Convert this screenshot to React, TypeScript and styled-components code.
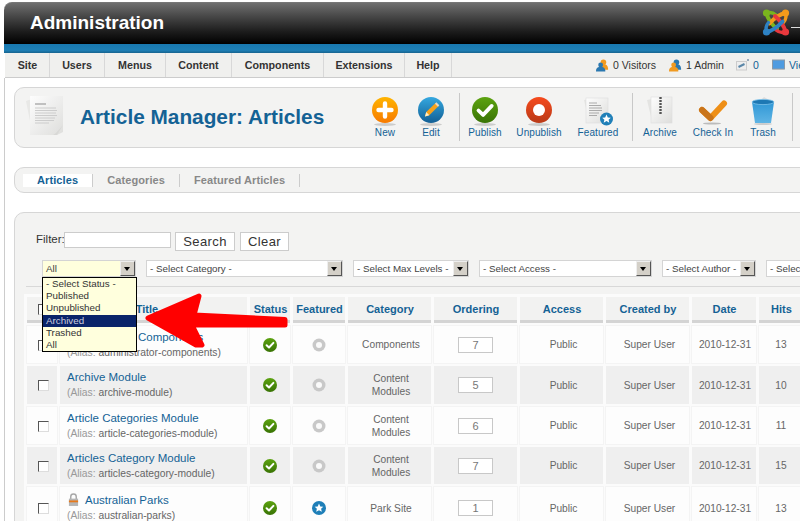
import React from "react";
import styled, { createGlobalStyle } from "styled-components";

const Global = createGlobalStyle`
  html, body { margin: 0; padding: 0; background: #fff; overflow: hidden; }
  body { font-family: "Liberation Sans", Arial, sans-serif; }
  * { box-sizing: border-box; }
`;

const BLUE = "#146295";

const Page = styled.div`
  position: relative;
  width: 800px;
  height: 521px;
  overflow: hidden;
  padding: 2px 0 0 4px;
`;
const Wide = styled.div`
  width: 1000px;
`;
const Header = styled.header`
  height: 42px;
  border-top-left-radius: 8px;
  background: linear-gradient(#6f6f6f 0%, #4a4a4a 30%, #1c1c1c 70%, #000 100%);
  border-top: 1px solid #777;
  display: flex;
  align-items: flex-start;
  padding-left: 26px;
`;
const Brand = styled.h1`
  margin: 8px 0 0;
  color: #fff;
  font-size: 19px;
  line-height: 24px;
  font-weight: bold;
`;
const LogoSlot = styled.div`
  margin: 5px 0 0 598px;
  display: flex;
  align-items: center;
`;
const LogoDash = styled.span`
  display: block;
  width: 10px;
  height: 1px;
  margin: 9px 0 0 1px;
  background: #ddd;
`;
const BlueBar = styled.div`
  height: 9px;
  background: linear-gradient(#1878b0, #1e7fb5 70%, #17648f);
`;
const Menu = styled.nav`
  height: 25px;
  margin-left: 1px;
  padding-left: 1px;
  background: #f0f0ee;
  border-bottom: 1px solid #ccc;
  display: flex;
  align-items: stretch;
`;
const MenuItem = styled.div<{ $w: number }>`
  width: ${(p) => p.$w}px;
  border-right: 1px solid #d8d8d8;
  font-size: 10.7px;
  font-weight: bold;
  color: #333;
  line-height: 24px;
  text-align: center;
`;
const Status = styled.div`
  margin-left: 144px;
  display: flex;
  align-items: center;
  height: 24px;
`;
const StatusEntry = styled.div<{ $w: number }>`
  width: ${(p) => p.$w}px;
  display: flex;
  align-items: center;
  gap: 4px;
  font-size: 10.5px;
  color: #333;
`;
const Count = styled.span`
  color: ${BLUE};
`;
const Body = styled.main`
  border-left: 1px solid #ccc;
  padding: 9px 0 0 9px;
`;
const Panel = styled.section`
  background: #f3f3f2;
  border: 1px solid #d6d6d6;
  border-radius: 10px 0 0 10px;
`;
const ToolPanel = styled(Panel)`
  height: 61px;
  display: flex;
  align-items: flex-start;
`;
const PageHead = styled.div`
  width: 347px;
  height: 59px;
  padding: 7px 0 0 10px;
  display: flex;
  align-items: flex-start;
`;
const Title = styled.h2`
  margin: 9px 0 0 15px;
  font-size: 20.8px;
  line-height: 25px;
  font-weight: bold;
  color: ${BLUE};
  white-space: nowrap;
`;
const ToolButton = styled.div<{ $w: number }>`
  width: ${(p) => p.$w}px;
  height: 59px;
  padding-top: 8px;
  display: flex;
  flex-direction: column;
  align-items: center;
  font-size: 10px;
  letter-spacing: 0.1px;
  color: ${BLUE};
`;
const ToolIcon = styled.div`
  height: 30px;
`;
const ToolLabel = styled.span`
  line-height: 13px;
  white-space: nowrap;
`;
const ToolSep = styled.div<{ $ml: number }>`
  width: 1px;
  height: 48px;
  margin: 5px -1px 0 ${(p) => p.$ml}px;
  background: #c8c8c8;
  flex: none;
`;
const TabPanel = styled(Panel)`
  height: 26px;
  margin-top: 19px;
  padding: 6px 0 0 8px;
  display: flex;
  align-items: flex-start;
`;
const Tab = styled.div<{ $active?: boolean }>`
  height: 13px;
  padding: 0 14px;
  border-right: 1px solid #ccc;
  background: ${(p) => (p.$active ? "#fff" : "transparent")};
  color: ${(p) => (p.$active ? BLUE : "#888")};
  font-size: 11px;
  font-weight: bold;
  line-height: 13px;
  letter-spacing: 0.1px;
`;
const MainPanel = styled(Panel)`
  margin-top: 19px;
  height: 400px;
  padding-top: 19px;
`;
const FilterRow = styled.div`
  height: 20px;
  padding-left: 21px;
  display: flex;
  align-items: flex-start;
  font-size: 11.5px;
  color: #333;
`;
const FilterLabel = styled.label`
  line-height: 14px;
  width: 28px;
`;
const FilterInput = styled.div`
  width: 107px;
  height: 16px;
  background: #fff;
  border: 1px solid #ccc;
`;
const FilterButton = styled.div<{ $w: number; $ml: number }>`
  width: ${(p) => p.$w}px;
  margin-left: ${(p) => p.$ml}px;
  height: 19px;
  background: #fff;
  border: 1px solid #ccc;
  font-size: 13px;
  letter-spacing: 0.4px;
  line-height: 18px;
  text-align: center;
  color: #333;
`;
const SelectRow = styled.div`
  margin-top: 8px;
  height: 17px;
  padding-left: 27px;
  display: flex;
  gap: 10px;
`;
const SelectBox = styled.div<{ $w: number; $open?: boolean }>`
  position: relative;
  flex: none;
  width: ${(p) => p.$w}px;
  height: 17px;
  padding: 0 0 0 3px;
  background: ${(p) => (p.$open ? "#ffffdd" : "#fff")};
  border: 1px solid #d4d4d4;
  font-size: 9.8px;
  line-height: 15px;
  color: #444;
  white-space: nowrap;
  overflow: visible;
`;
const SelectArrow = styled.span`
  position: absolute;
  right: 0;
  top: 0;
  width: 15px;
  height: 15px;
  background: #d4d0c8;
  border: 1px solid;
  border-color: #eee #555 #555 #eee;
  &::after {
    content: "";
    position: absolute;
    left: 3px;
    top: 5px;
    border: 3px solid transparent;
    border-top: 4px solid #000;
    border-bottom: 0;
  }
`;
const Dropdown = styled.ul`
  position: absolute;
  z-index: 3;
  left: -1px;
  top: 16px;
  width: 95px;
  height: 75px;
  margin: 0;
  padding: 0;
  list-style: none;
  background: #ffffdd;
  border: 1px solid #000;
`;
const Option = styled.li<{ $selected?: boolean }>`
  height: 12.2px;
  padding-left: 3px;
  font-size: 9.8px;
  line-height: 11px;
  background: ${(p) => (p.$selected ? "#0a246a" : "transparent")};
  color: ${(p) => (p.$selected ? "#ccd" : "#333")};
`;
const Rule = styled.hr`
  margin: 9px 0 0 11px;
  height: 1px;
  border: 0;
  background: #d8d8d8;
`;
const Table = styled.table`
  margin: 7px 0 0 9px;
  table-layout: fixed;
  width: 782px;
  border-collapse: separate;
  border-spacing: 3px;
  background: #fbfbfb;
`;
const HeadCell = styled.th`
  height: 26px;
  padding: 0 0 0 1px;
  background: #f2f2f1;
  border-bottom: 3px solid #d4d4d4;
  font-size: 11px;
  font-weight: bold;
  color: ${BLUE};
  text-align: center;
`;
const SortMark = styled.span`
  display: inline-block;
  margin-left: 8px;
  vertical-align: middle;
  border: 3px solid transparent;
  border-bottom: 4px solid ${BLUE};
  border-top: 0;
`;
const Cell = styled.td<{ $even: boolean; $pad?: number }>`
  padding: 0 0 0 ${(p) => p.$pad ?? 0}px;
  background: ${(p) => (p.$even ? "#efefef" : "#fdfdfd")};
  outline: 1px solid ${(p) => (p.$even ? "transparent" : "#f4f4f4")};
  font-size: 10.2px;
  line-height: 13px;
  color: #666;
  text-align: center;
`;
const TitleCell = styled(Cell)`
  padding-left: 7px;
  text-align: left;
`;
const ArticleLink = styled.div`
  font-size: 11.5px;
  line-height: 16px;
  color: ${BLUE};
  white-space: nowrap;
  display: flex;
  align-items: center;
  gap: 6px;
`;
const Alias = styled.div`
  font-size: 10.3px;
  line-height: 16px;
  color: #666;
  white-space: nowrap;
`;
const AliasKey = styled.span`
  color: #999;
`;
const Check = styled.span`
  display: inline-block;
  vertical-align: middle;
  width: 11px;
  height: 11px;
  margin-left: 2px;
  background: #fff;
  border: 1px solid;
  border-color: #555 #ddd #ddd #555;
`;
const OrderBox = styled.div`
  width: 35px;
  height: 16px;
  margin: 0 auto;
  background: #fff;
  border: 1px solid #c8c8c8;
  font-size: 11px;
  line-height: 14px;
  color: #777;
`;
const Arrow = styled.svg`
  position: absolute;
  z-index: 4;
  left: 0;
  top: 0;
  pointer-events: none;
`;

const Defs = () => (
  <svg width="0" height="0" style={{ position: "absolute" }}>
    <defs>
      <linearGradient id="gOrange" x1="0" y1="0" x2="0" y2="1"><stop offset="0" stopColor="#ffb400" /><stop offset="1" stopColor="#f77a00" /></linearGradient>
      <linearGradient id="gBlue" x1="0" y1="0" x2="0" y2="1"><stop offset="0" stopColor="#35a8e0" /><stop offset="1" stopColor="#125f95" /></linearGradient>
      <linearGradient id="gGreen" x1="0" y1="0" x2="0" y2="1"><stop offset="0" stopColor="#5ca310" /><stop offset="1" stopColor="#397305" /></linearGradient>
      <linearGradient id="gRed" x1="0" y1="0" x2="0" y2="1"><stop offset="0" stopColor="#f64a1d" /><stop offset="1" stopColor="#b93a18" /></linearGradient>
      <linearGradient id="gBin" x1="0" y1="0" x2="0" y2="1"><stop offset="0" stopColor="#2f97d6" /><stop offset="1" stopColor="#5fb4e4" /></linearGradient>
      <linearGradient id="gPaper" x1="0" y1="0" x2="1" y2="1"><stop offset="0" stopColor="#fdfdfd" /><stop offset="1" stopColor="#dededc" /></linearGradient>
    </defs>
  </svg>
);

const Shadow = () => <ellipse cx="14" cy="28.5" rx="11" ry="1.4" fill="#bbb" opacity=".7" />;

const NewIcon = () => (
  <svg width="28" height="30" viewBox="0 0 28 30">
    <Shadow />
    <circle cx="14" cy="14" r="13" fill="url(#gOrange)" />
    <path d="M14 7.5v13M7.5 14h13" stroke="#fff" strokeWidth="4.4" strokeLinecap="round" />
  </svg>
);
const EditIcon = () => (
  <svg width="28" height="30" viewBox="0 0 28 30">
    <Shadow />
    <circle cx="14" cy="14" r="13" fill="url(#gBlue)" />
    <path d="M8 20.5l1.2-4.4L18.6 7l3 3-9.3 9.2z" fill="#f6a21c" />
    <path d="M18.6 7l3 3" stroke="#e9d8c0" strokeWidth="2" />
    <path d="M8 20.5l1.2-4.4 3.1 3.1z" fill="#fff0c8" />
  </svg>
);
const PublishIcon = () => (
  <svg width="28" height="30" viewBox="0 0 28 30">
    <Shadow />
    <circle cx="14" cy="14" r="13" fill="url(#gGreen)" />
    <path d="M7.5 14.5l4.6 4.4 8.6-9" fill="none" stroke="#fff" strokeWidth="3.8" strokeLinecap="round" strokeLinejoin="round" />
  </svg>
);
const UnpublishIcon = () => (
  <svg width="28" height="30" viewBox="0 0 28 30">
    <Shadow />
    <circle cx="14" cy="14" r="13" fill="url(#gRed)" />
    <circle cx="14" cy="14" r="6" fill="#fff" />
  </svg>
);
const FeaturedIcon = () => (
  <svg width="32" height="30" viewBox="0 0 32 30">
    <path d="M2 4l5-1v22z" fill="#e4e4e2" />
    <rect x="4" y="2" width="22" height="25" fill="url(#gPaper)" stroke="#ddd" strokeWidth=".6" />
    <path d="M7 7h8M7 9.5h12M7 12h13M7 14.5h13M7 17h10M7 19.5h8" stroke="#aaa" strokeWidth="1" />
    <circle cx="24.5" cy="23" r="6.5" fill="#1f7fb8" />
    <path d="M24.5 18.6l1.3 2.8 3 .3-2.2 2 .7 3-2.8-1.6-2.8 1.6.7-3-2.2-2 3-.3z" fill="#fff" />
  </svg>
);
const ArchiveIcon = () => (
  <svg width="30" height="30" viewBox="0 0 30 30">
    <path d="M2 4l5-1v22z" fill="#e4e4e2" />
    <rect x="6" y="1" width="21" height="26" fill="url(#gPaper)" stroke="#ddd" strokeWidth=".6" />
    <path d="M15.5 1v18" stroke="#555" strokeWidth="2.4" strokeDasharray="2 1" />
  </svg>
);
const CheckInIcon = () => (
  <svg width="30" height="30" viewBox="0 0 30 30">
    <ellipse cx="14" cy="27.5" rx="9" ry="1" fill="#bbb" />
    <path d="M4 14l8.5 8L26 7.5" fill="none" stroke="#ee8f17" strokeWidth="6" strokeLinecap="round" strokeLinejoin="round" />
    <path d="M4 14l8.5 8" fill="none" stroke="#c9741a" strokeWidth="6" strokeLinecap="round" />
  </svg>
);
const TrashIcon = () => (
  <svg width="30" height="30" viewBox="0 0 30 30">
    <ellipse cx="15" cy="28" rx="9" ry="1" fill="#ccc" />
    <path d="M12 5l4-4 5 3z" fill="#ddd" />
    <path d="M4 6h22l-3 21H7z" fill="url(#gBin)" />
    <ellipse cx="15" cy="6" rx="11" ry="2.6" fill="#1d78b4" stroke="#7cc2ea" strokeWidth=".8" />
  </svg>
);
const ArticlesDoc = () => (
  <svg width="40" height="42" viewBox="0 0 40 42" style={{ flex: "none" }}>
    <path d="M1 6l6-2v32z" fill="#e8e8e6" />
    <path d="M5 1h33v36l-6 3H5z" fill="url(#gPaper)" />
    <path d="M38 30l-6 10h-4c4-2 6-6 10-10z" fill="#d8d8d6" />
    <path d="M10 9h11" stroke="#aaa" strokeWidth="1.4" />
    <path d="M10 13h21M10 15.5h22M10 18h21M10 20.5h22M10 23h20M10 25.5h19M10 28h14" stroke="#ccc" strokeWidth="1" />
  </svg>
);
const Hook = ({ color, angle }: { color: string; angle: number }) => (
  <g transform={`rotate(${angle} 14 14.5)`}>
    <path d="M4.5 5 Q6 13 15 21" fill="none" stroke={color} strokeWidth="4" strokeLinecap="round" />
    <path d="M4.5 5 Q10 3.5 14 7" fill="none" stroke={color} strokeWidth="3.4" strokeLinecap="round" />
    <circle cx="4.5" cy="5" r="3.6" fill={color} />
  </g>
);
const JoomlaLogo = () => (
  <svg width="28" height="29" viewBox="0 0 28 29">
    <Hook color="#7ab51d" angle={0} />
    <Hook color="#f49a1a" angle={90} />
    <Hook color="#e8383d" angle={180} />
    <Hook color="#2e82c4" angle={270} />
  </svg>
);
const PeopleIcon = ({ flip }: { flip?: boolean }) => {
  const back = flip ? "#f09a20" : "#2b78b0";
  const front = flip ? "#2b78b0" : "#f09a20";
  return (
    <svg width="13" height="14" viewBox="0 0 14 14" style={{ flex: "none" }}>
      <circle cx="8" cy="4" r="3" fill={front} />
      <path d="M3 11c0-3 2-5 5-5s5 2 5 5v1H3z" fill={front} />
      <circle cx="5" cy="7" r="2.6" fill={back} />
      <path d="M0 13c0-2.4 2-4 5-4s5 1.6 5 4v1H0z" fill={back} />
    </svg>
  );
};
const MailIcon = () => (
  <svg width="13" height="12" viewBox="0 0 13 12" style={{ flex: "none" }}>
    <rect x="0.5" y="2.5" width="10" height="8.5" fill="#eee" stroke="#ccc" />
    <path d="M2.5 8l6-3" stroke="#5b87a8" strokeWidth="2" />
    <path d="M11 0h2v2h-2z" fill="#9ab" />
  </svg>
);
const ScreenIcon = () => (
  <svg width="13" height="12" viewBox="0 0 13 12" style={{ flex: "none" }}>
    <rect x=".5" y="1" width="12" height="9" fill="#4f9be0" stroke="#8a99a8" />
    <rect x="1" y="10" width="11" height="1" fill="#bbb" />
  </svg>
);
const StatusOk = () => (
  <svg width="14" height="14" viewBox="0 0 14 14" style={{ verticalAlign: "middle" }}>
    <circle cx="7" cy="7" r="7" fill="url(#gGreen)" />
    <path d="M3.6 7.2l2.4 2.3 4.4-4.6" fill="none" stroke="#fff" strokeWidth="2" strokeLinecap="round" strokeLinejoin="round" />
  </svg>
);
const FeatOff = () => (
  <svg width="14" height="14" viewBox="0 0 14 14" style={{ verticalAlign: "middle" }}>
    <circle cx="7" cy="7" r="6.5" fill="#c8c8c8" />
    <circle cx="7" cy="7" r="3" fill="#fafafa" />
  </svg>
);
const FeatOn = () => (
  <svg width="14" height="14" viewBox="0 0 14 14" style={{ verticalAlign: "middle" }}>
    <circle cx="7" cy="7" r="7" fill="#1f7fb8" />
    <path d="M7 2.6l1.3 2.8 3 .3-2.2 2 .7 3L7 9.2l-2.8 1.5.7-3-2.2-2 3-.3z" fill="#fff" />
  </svg>
);
const LockIcon = () => (
  <svg width="11" height="14" viewBox="0 0 12 15" style={{ flex: "none", marginLeft: 1 }}>
    <path d="M3 7V4a3 3 0 0 1 6 0v3" fill="none" stroke="#a8a8a8" strokeWidth="1.6" />
    <rect x="1" y="6" width="10" height="8" fill="#b5b5b5" />
    <rect x="1" y="8" width="10" height="2" fill="#e8791a" />
  </svg>
);

const menuItems = [
  { label: "Site", w: 44 },
  { label: "Users", w: 55 },
  { label: "Menus", w: 61 },
  { label: "Content", w: 66 },
  { label: "Components", w: 92 },
  { label: "Extensions", w: 81 },
  { label: "Help", w: 47 },
];

type Tool = { label?: string; w?: number; icon?: React.ReactNode; sepMl?: number };
const tools: Tool[] = [
  { label: "New", w: 46, icon: <NewIcon /> },
  { label: "Edit", w: 46, icon: <EditIcon /> },
  { sepMl: 5 },
  { label: "Publish", w: 52, icon: <PublishIcon /> },
  { label: "Unpublish", w: 56, icon: <UnpublishIcon /> },
  { label: "Featured", w: 62, icon: <FeaturedIcon /> },
  { sepMl: 3 },
  { label: "Archive", w: 56, icon: <ArchiveIcon /> },
  { label: "Check In", w: 50, icon: <CheckInIcon /> },
  { label: "Trash", w: 50, icon: <TrashIcon /> },
  { sepMl: 4 },
];

const selects = [
  { w: 94, text: "All", open: true },
  { w: 197, text: "- Select Category -" },
  { w: 116, text: "- Select Max Levels -" },
  { w: 173, text: "- Select Access -" },
  { w: 94, text: "- Select Author -" },
  { w: 120, text: "- Select Language -" },
];

const options = ["- Select Status -", "Published", "Unpublished", "Archived", "Trashed", "All"];

const columns = [
  { label: "", w: 30 },
  { label: "Title", w: 187 },
  { label: "Status", w: 40 },
  { label: "Featured", w: 52 },
  { label: "Category", w: 83 },
  { label: "Ordering", w: 83 },
  { label: "Access", w: 83 },
  { label: "Created by", w: 83 },
  { label: "Date", w: 64 },
  { label: "Hits", w: 44 },
];

const rows = [
  { title: "Administrator Components", alias: "administrator-components", cat: ["Components"], order: 7, hits: 13, h: 37 },
  { title: "Archive Module", alias: "archive-module", cat: ["Content", "Modules"], order: 5, hits: 10, h: 38 },
  { title: "Article Categories Module", alias: "article-categories-module", cat: ["Content", "Modules"], order: 6, hits: 11, h: 37 },
  { title: "Articles Category Module", alias: "articles-category-module", cat: ["Content", "Modules"], order: 7, hits: 15, h: 37 },
  { title: "Australian Parks", alias: "australian-parks", cat: ["Park Site"], order: 1, hits: 13, h: 42, locked: true, featured: true },
];

export default function App() {
  return (
    <Page>
      <Global />
      <Defs />
      <Wide>
        <Header>
          <Brand>Administration</Brand>
          <LogoSlot>
            <JoomlaLogo />
            <LogoDash />
          </LogoSlot>
        </Header>
        <BlueBar />
        <Menu>
          {menuItems.map((m) => (
            <MenuItem key={m.label} $w={m.w}>{m.label}</MenuItem>
          ))}
          <Status>
            <StatusEntry $w={73}><PeopleIcon /><span>0 Visitors</span></StatusEntry>
            <StatusEntry $w={67}><PeopleIcon flip /><span>1 Admin</span></StatusEntry>
            <StatusEntry $w={36}><MailIcon /><Count>0</Count></StatusEntry>
            <StatusEntry $w={90}><ScreenIcon /><Count>View site</Count></StatusEntry>
          </Status>
        </Menu>
        <Body>
          <ToolPanel>
            <PageHead>
              <ArticlesDoc />
              <Title>Article Manager: Articles</Title>
            </PageHead>
            {tools.map((t, i) =>
              t.sepMl !== undefined ? (
                <ToolSep key={i} $ml={t.sepMl} />
              ) : (
                <ToolButton key={i} $w={t.w as number}>
                  <ToolIcon>{t.icon}</ToolIcon>
                  <ToolLabel>{t.label}</ToolLabel>
                </ToolButton>
              )
            )}
          </ToolPanel>
          <TabPanel>
            <Tab $active>Articles</Tab>
            <Tab>Categories</Tab>
            <Tab>Featured Articles</Tab>
          </TabPanel>
          <MainPanel>
            <FilterRow>
              <FilterLabel>Filter:</FilterLabel>
              <FilterInput />
              <FilterButton $w={60} $ml={4}>Search</FilterButton>
              <FilterButton $w={49} $ml={5}>Clear</FilterButton>
            </FilterRow>
            <SelectRow>
              {selects.map((s) => (
                <SelectBox key={s.text} $w={s.w} $open={s.open}>
                  {s.text}
                  <SelectArrow />
                  {s.open && (
                    <Dropdown>
                      {options.map((o) => (
                        <Option key={o} $selected={o === "Archived"}>{o}</Option>
                      ))}
                    </Dropdown>
                  )}
                </SelectBox>
              ))}
            </SelectRow>
            <Rule />
            <Table>
              <colgroup>
                {columns.map((c, i) => (
                  <col key={i} style={{ width: c.w }} />
                ))}
              </colgroup>
              <thead>
                <tr>
                  {columns.map((c, i) => (
                    <HeadCell key={i}>
                      {i === 0 ? <Check /> : c.label}
                      {c.label === "Title" && <SortMark />}
                    </HeadCell>
                  ))}
                </tr>
              </thead>
              <tbody>
                {rows.map((r, i) => {
                  const even = i % 2 === 1;
                  return (
                    <tr key={r.alias} style={{ height: r.h }}>
                      <Cell $even={even}><Check /></Cell>
                      <TitleCell $even={even}>
                        <ArticleLink>
                          {r.locked && <LockIcon />}
                          <span>{r.title}</span>
                        </ArticleLink>
                        <Alias><AliasKey>(Alias:</AliasKey> {r.alias})</Alias>
                      </TitleCell>
                      <Cell $even={even}><StatusOk /></Cell>
                      <Cell $even={even}>{r.featured ? <FeatOn /> : <FeatOff />}</Cell>
                      <Cell $even={even} $pad={3}>
                        {r.cat.map((c) => (
                          <div key={c}>{c}</div>
                        ))}
                      </Cell>
                      <Cell $even={even}><OrderBox>{r.order}</OrderBox></Cell>
                      <Cell $even={even} $pad={4}>Public</Cell>
                      <Cell $even={even} $pad={4}>Super User</Cell>
                      <Cell $even={even} $pad={2}>2010-12-31</Cell>
                      <Cell $even={even}>{r.hits}</Cell>
                    </tr>
                  );
                })}
              </tbody>
            </Table>
          </MainPanel>
        </Body>
      </Wide>
      <Arrow width="800" height="521" viewBox="0 0 800 521">
        <path
          d="M148 318 L199 296 L194 315 L285 319.5 L285 325 L192 325 L202 345 L196 345 Z"
          fill="#f00"
          stroke="#f00"
          strokeWidth="5"
          strokeLinejoin="round"
        />
      </Arrow>
    </Page>
  );
}
